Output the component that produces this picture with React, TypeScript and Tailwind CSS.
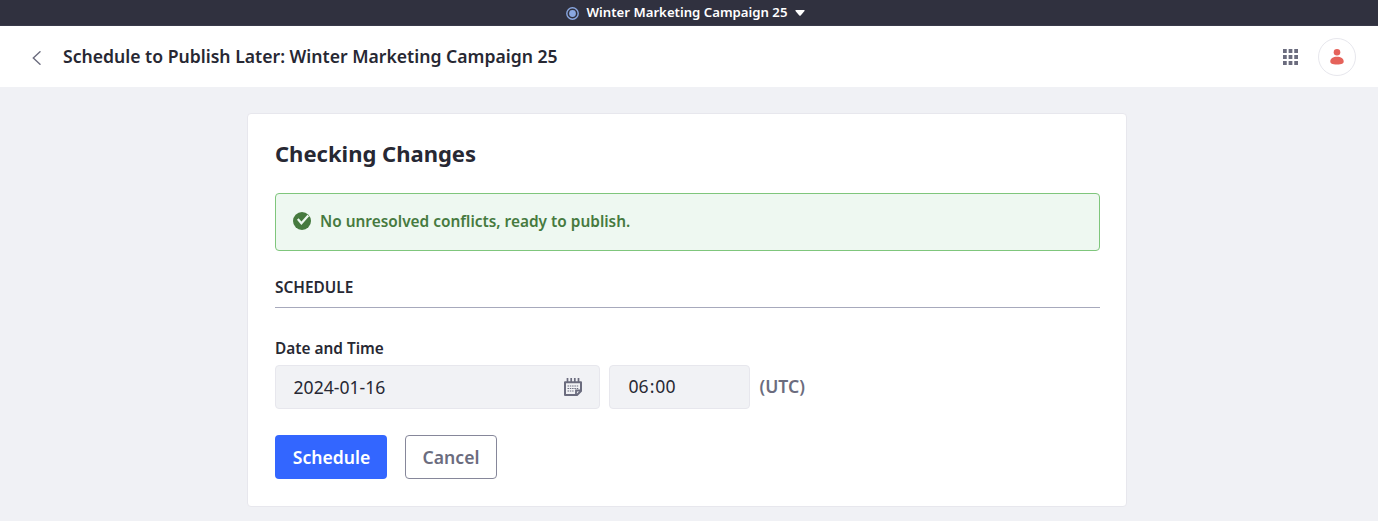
export default function App() {
  return (
    <div className="flex h-[521px] w-[1378px] flex-col overflow-hidden bg-[#f0f1f5] font-['Noto_Sans',sans-serif] text-[#272833]">
      <div className="flex h-[26px] shrink-0 items-center border-b border-[#393a4a] bg-[#30313f] pl-[566px] text-white">
        <svg className="mt-[2px] h-[13px] w-[13px]" viewBox="0 0 13 13">
          <circle cx="6.5" cy="6.5" r="5.7" fill="none" stroke="#89a7e0" strokeWidth="1.4" />
          <circle cx="6.5" cy="6.5" r="3.4" fill="#89a7e0" />
        </svg>
        <span className="mb-[2px] ml-[7.5px] w-[202px] text-[13.2px] leading-[18px] font-semibold whitespace-nowrap">Winter Marketing Campaign 25</span>
        <svg className="mt-px ml-[6.5px] h-[6px] w-[10px]" viewBox="0 0 10 6">
          <path d="M1 0h8q1 .3.5 1L5.7 5.4q-.7.7-1.4 0L.5 1Q0 .3 1 0Z" fill="currentColor" />
        </svg>
      </div>
      <header className="flex h-[61px] shrink-0 items-center bg-white pr-[22.5px] pl-[32px]">
        <svg className="mt-[2px] h-[14px] w-[9px] text-[#6b6c7e]" viewBox="0 0 9 14">
          <path d="M8 .7 1.3 7 8 13.300" fill="none" stroke="currentColor" strokeWidth="1.4" strokeLinecap="round" />
        </svg>
        <h1 className="mb-[2px] ml-[22px] text-[17.6px] leading-6 font-semibold">Schedule to Publish Later: Winter Marketing Campaign 25</h1>
        <svg className="ml-auto h-4 w-[15px] text-[#6b6c7e]" viewBox="0 0 16 16" preserveAspectRatio="none" fill="currentColor">
          <path d="M0 0h4v4H0zM6 0h4v4H6zM12 0h4v4h-4zM0 6h4v4H0zM6 6h4v4H6zM12 6h4v4h-4zM0 12h4v4H0zM6 12h4v4H6zM12 12h4v4h-4z" />
        </svg>
        <div className="ml-[19.5px] flex h-[38px] w-[38px] items-center justify-center rounded-full border border-[#e7e7ed]">
          <svg className="h-4 w-4 text-[#e5625a]" viewBox="0 0 16 16" fill="currentColor">
            <circle cx="8" cy="3.300" r="3.300" />
            <path d="M1.300 12.500C1.300 9.500 4 7.700 8 7.700s6.700 1.800 6.700 4.800c0 2-1.700 3-6.700 3s-6.700-1-6.700-3Z" />
          </svg>
        </div>
      </header>
      <main className="mt-[26px] ml-[247px] flex h-[394px] w-[880px] shrink-0 flex-col rounded border border-[#e7e7ed] bg-white pt-[23px] pr-[26px] pl-[27px]">
        <h2 className="text-[22px] leading-[33px] font-bold">Checking Changes</h2>
        <div className="mt-[23px] flex h-[58px] items-center rounded border border-[#7fc67c] bg-[#eef8f1] pl-[17px] text-[#467a3f]">
          <svg className="mb-[2px] h-[18px] w-[18px]" viewBox="0 0 18 18">
            <circle cx="9" cy="9" r="9" fill="currentColor" />
            <path d="m4.800 7 3.600 4.300L15.300 3.500" fill="none" stroke="#eef8f1" strokeWidth="2.200" />
          </svg>
          <span className="ml-[9px] text-[15.4px] font-semibold">No unresolved conflicts, ready to publish.</span>
        </div>
        <h3 className="mt-[25px] h-[32px] border-b border-[#a7a9bc] text-[15.4px] leading-6 font-semibold">SCHEDULE</h3>
        <label className="mt-[29px] text-[15.4px] leading-6 font-semibold">Date and Time</label>
        <div className="mt-[4px] flex h-[44px] items-center">
          <div className="flex h-[44px] w-[325px] items-center justify-between rounded border border-[#e7e7ed] bg-[#f1f2f5] pr-[17px] pl-[17.5px] text-[17.6px]">
            <span>2024-01-16</span>
            <svg className="h-[18px] w-[18px] text-[#6b6c7e]" viewBox="0 0 18 18" fill="none" stroke="currentColor">
              <path d="M3.500 0v5M7.200 0v5M10.800 0v5M14.500 0v5" strokeWidth="1.700" />
              <path d="M1 4.200h16V13l-4 4H1Z" strokeWidth="2" strokeLinejoin="round" />
              <path d="M3.500 8H15M3.500 10.500H15M3.500 13H10" strokeWidth="1.100" strokeDasharray="1.500 .8" />
              <path d="M12 17v-4.500h5" strokeWidth="1.800" />
            </svg>
          </div>
          <div className="ml-[9px] flex h-[44px] w-[141px] items-center rounded border border-[#e7e7ed] bg-[#f1f2f5] pb-[2px] pl-[18.5px] text-[17.6px]"><span>06</span><span className="px-px">:</span><span>00</span></div>
          <span className="mb-[2px] ml-[9.5px] text-[17.6px] font-semibold text-[#6b6c7e]">(UTC)</span>
        </div>
        <div className="mt-[26px] flex gap-[18px] text-[17.6px] font-semibold">
          <button className="h-[44px] w-[112px] rounded bg-[#3366ff] pl-px text-white">Schedule</button>
          <button className="h-[44px] w-[92px] rounded border border-[#86879a] text-[#6b6c7e]">Cancel</button>
        </div>
      </main>
    </div>
  );
}
